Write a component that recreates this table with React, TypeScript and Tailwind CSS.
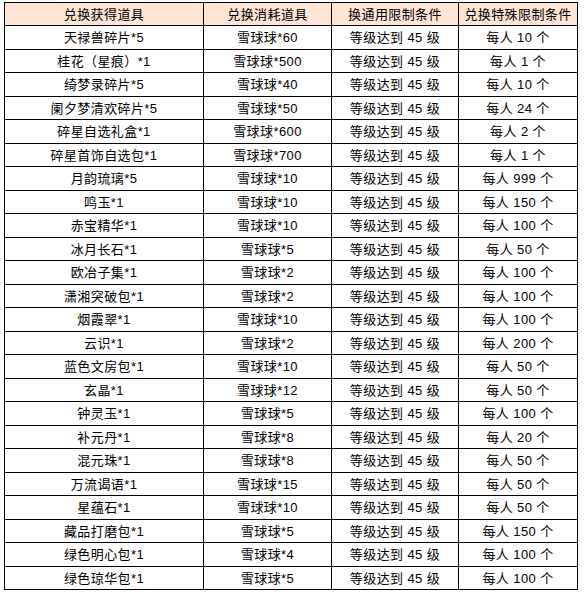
import React from "react";

const headers = ["兑换获得道具", "兑换消耗道具", "换通用限制条件", "兑换特殊限制条件"];

// [获得道具, 消耗, 每人上限]
const rows: [string, string, string][] = [
  ["天禄兽碎片*5", "雪球球*60", "10"],
  ["桂花（星痕）*1", "雪球球*500", "1"],
  ["绮梦录碎片*5", "雪球球*40", "10"],
  ["阑夕梦清欢碎片*5", "雪球球*50", "24"],
  ["碎星自选礼盒*1", "雪球球*600", "2"],
  ["碎星首饰自选包*1", "雪球球*700", "1"],
  ["月韵琉璃*5", "雪球球*10", "999"],
  ["鸣玉*1", "雪球球*10", "150"],
  ["赤宝精华*1", "雪球球*10", "100"],
  ["冰月长石*1", "雪球球*5", "50"],
  ["欧冶子集*1", "雪球球*2", "100"],
  ["潇湘突破包*1", "雪球球*2", "100"],
  ["烟霞翠*1", "雪球球*10", "100"],
  ["云识*1", "雪球球*2", "200"],
  ["蓝色文房包*1", "雪球球*10", "50"],
  ["玄晶*1", "雪球球*12", "50"],
  ["钟灵玉*1", "雪球球*5", "100"],
  ["补元丹*1", "雪球球*8", "20"],
  ["混元珠*1", "雪球球*8", "50"],
  ["万流谒语*1", "雪球球*15", "50"],
  ["星蕴石*1", "雪球球*10", "50"],
  ["藏品打磨包*1", "雪球球*5", "150"],
  ["绿色明心包*1", "雪球球*4", "100"],
  ["绿色琼华包*1", "雪球球*5", "100"],
];

const cell =
  "flex items-center justify-center border-r border-b border-black whitespace-nowrap";

export default function App() {
  return (
    <div
      className="w-[586px] h-[594px] bg-white pt-[2px] pl-[4px] text-[13px] tracking-[0.4px] text-black leading-none"
      style={{ fontFamily: '"Liberation Sans", "Noto Sans CJK SC", sans-serif' }}
    >
      <div className="grid grid-cols-[199px_128px_127px_119px] w-[574px] border-l border-t border-black">
        {headers.map((h) => (
          <div key={h} className={`${cell} h-[23px] bg-[#fde4d4]`}>
            {h}
          </div>
        ))}
        {rows.map(([item, cost, limit], i) => {
          const h = i % 2 === 0 ? "h-[24px]" : "h-[23px]";
          return (
            <React.Fragment key={item}>
              <div className={`${cell} ${h}`}>{item}</div>
              <div className={`${cell} ${h}`}>{cost}</div>
              <div className={`${cell} ${h}`}>等级达到 45 级</div>
              <div className={`${cell} ${h}`}>每人 {limit} 个</div>
            </React.Fragment>
          );
        })}
      </div>
    </div>
  );
}
